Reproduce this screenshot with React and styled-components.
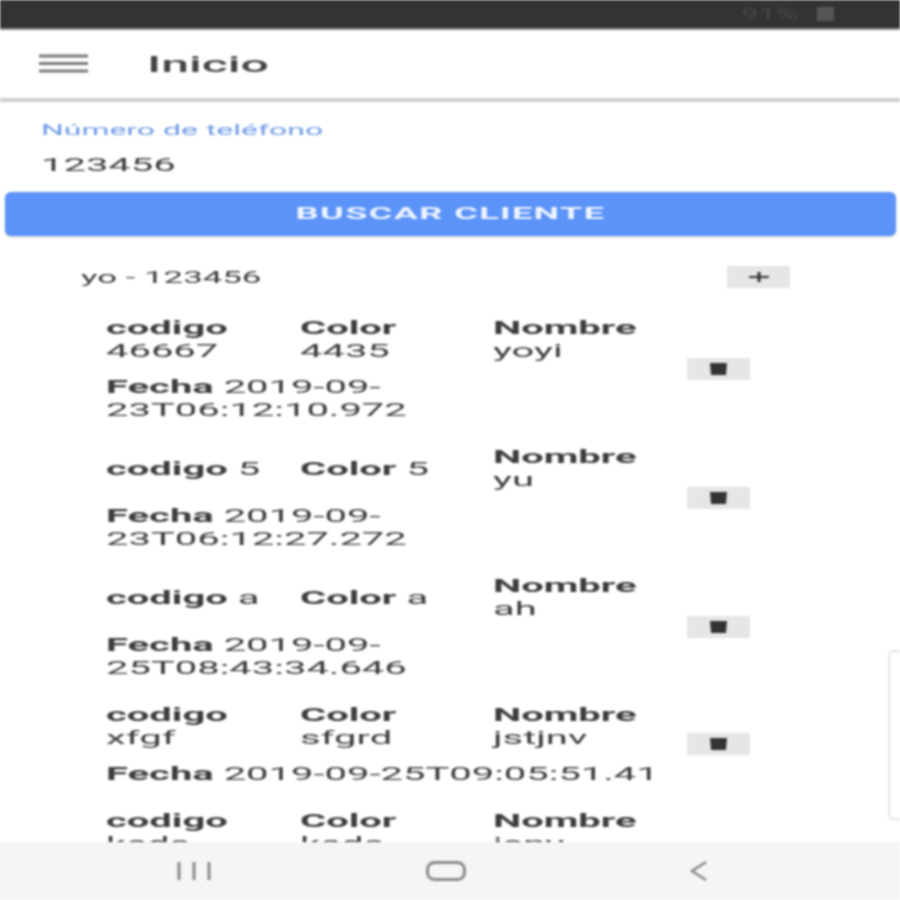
import styled, { createGlobalStyle } from 'styled-components';

// the screenshot is squashed vertically, so text gets stretched sideways
const STRETCH = 2.22;

const GlobalStyle = createGlobalStyle`
  html, body, #root {
    margin: 0;
    padding: 0;
    height: 100%;
    background: #ffffff;
  }
`;

const Page = styled.div`
  position: relative;
  width: 900px;
  height: 900px;
  overflow: hidden;
  display: flex;
  flex-direction: column;
  background: #ffffff;
  font-family: Roboto, "Liberation Sans", sans-serif;
  filter: blur(0.8px);
`;

const Text = styled.div`
  width: calc(100% / ${STRETCH});
  transform: scaleX(${STRETCH});
  transform-origin: left center;
  font-size: ${p => p.$size || 18}px;
  line-height: ${p => p.$line || 23}px;
  font-weight: ${p => p.$weight || 400};
  color: ${p => p.$color || '#3c3c3c'};
  text-align: ${p => p.$align || 'left'};
  letter-spacing: ${p => p.$spacing || 0}px;
  white-space: ${p => (p.$nowrap ? 'nowrap' : 'normal')};
`;

const StatusBar = styled.div`
  flex: none;
  height: 28px;
  background: #333333;
  border-bottom: 2px solid #8a8a8a;
  display: flex;
  align-items: center;
  justify-content: flex-end;
  gap: 6px;
  padding-right: 66px;
`;

const BatteryText = styled.div`
  width: 70px;
`;

const BatteryIcon = styled.div`
  width: 17px;
  height: 14px;
  background: #555555;
`;

const Header = styled.div`
  flex: none;
  height: 68px;
  display: flex;
  align-items: center;
  padding-left: 39px;
  gap: 59px;
`;

const MenuIcon = styled.svg`
  flex: none;
  width: 49px;
  height: 20px;
`;

const Title = styled.div`
  width: 200px;
`;

const Divider = styled.div`
  flex: none;
  height: 4px;
  background: #cfcfcf;
`;

const Content = styled.div`
  flex: 1;
  min-height: 0;
  overflow: hidden;
`;

const Field = styled.div`
  padding: 19px 41px 0;
  height: 90px;
  box-sizing: border-box;
  display: flex;
  flex-direction: column;
  gap: 12px;
`;

const SearchButton = styled.div`
  margin: 0 4px 0 5px;
  height: 44px;
  border-radius: 6px;
  background: #5b93f8;
  display: flex;
  align-items: center;
  box-shadow: 0 1px 2px rgba(0, 0, 0, 0.2);
`;

const ClientRow = styled.div`
  display: flex;
  align-items: center;
  justify-content: space-between;
  margin: 30px 110px 0 81px;
  height: 22px;
`;

const ClientName = styled.div`
  width: 400px;
`;

const ActionButton = styled.div`
  flex: none;
  width: 63px;
  height: 22px;
  background: #e6e6e6;
  display: flex;
  align-items: center;
  justify-content: center;
`;

const PlusIcon = styled.svg`
  width: 22px;
  height: 14px;
`;

const TrashIcon = styled.svg`
  width: 17px;
  height: 14px;
`;

const ItemList = styled.div`
  margin-top: 28px;
  padding-left: 106px;
  display: flex;
  flex-direction: column;
  gap: 24px;
`;

const Item = styled.div`
  display: flex;
  align-items: center;
`;

const ItemBody = styled.div`
  width: 581px;
  display: flex;
  flex-direction: column;
  gap: 13px;
`;

const Columns = styled.div`
  display: flex;
  align-items: center;
`;

const Column = styled.div`
  width: 194px;
  padding-right: 14px;
  box-sizing: border-box;
`;

const FechaBlock = styled.div`
  width: 560px;
`;

const NavBar = styled.div`
  flex: none;
  position: relative;
  height: 58px;
  background: #f5f5f5;
  display: grid;
  grid-template-columns: 176px 36px 214px 40px 224px 18px;
  align-items: center;
`;

const NavIcon = styled.svg`
  grid-column: ${p => p.$col};
  width: ${p => p.$w}px;
  height: 20px;
`;

const EdgeTab = styled.div`
  position: absolute;
  top: 650px;
  right: 0;
  width: 10px;
  height: 166px;
  border: 2px solid #e6e6e6;
  border-right: none;
  border-radius: 6px 0 0 6px;
  background: #ffffff;
`;

const items = [
  { codigo: '46667', color: '4435', nombre: 'yoyi', fecha: '2019-09-23T06:12:10.972' },
  { codigo: '5', color: '5', nombre: 'yu', fecha: '2019-09-23T06:12:27.272' },
  { codigo: 'a', color: 'a', nombre: 'ah', fecha: '2019-09-25T08:43:34.646' },
  { codigo: 'xfgf', color: 'sfgrd', nombre: 'jstjnv', fecha: '2019-09-25T09:05:51.41' },
  { codigo: 'keds', color: 'keds', nombre: 'jsny', fecha: '2019-09-25T09:07:12.112' },
];

function Trash() {
  return (
    <TrashIcon viewBox="0 0 17 14">
      <path d="M0 1h17l-1 12H1z" fill="#333" />
    </TrashIcon>
  );
}

function LabelValue({ label, value }) {
  return (
    <Text>
      <b>{label}</b> {value}
    </Text>
  );
}

function App() {
  return (
    <Page>
      <GlobalStyle />
      <StatusBar>
        <BatteryText>
          <Text $size={14} $line={16} $color="#474747" $nowrap>
            91%
          </Text>
        </BatteryText>
        <BatteryIcon />
      </StatusBar>
      <Header>
        <MenuIcon viewBox="0 0 49 20">
          <path d="M0 2h49M0 9.5h49M0 17h49" stroke="#7a7a7a" strokeWidth="3" />
        </MenuIcon>
        <Title>
          <Text $size={22.5} $line={28} $weight={500} $color="#444444">
            Inicio
          </Text>
        </Title>
      </Header>
      <Divider />
      <Content>
        <Field>
          <Text $size={14.4} $line={20} $color="#6f9be6" $nowrap>
            Número de teléfono
          </Text>
          <Text $nowrap>123456</Text>
        </Field>
        <SearchButton>
          <Text $size={16.3} $line={40} $weight={700} $color="#eef4ff" $align="center" $spacing={0.6}>
            BUSCAR CLIENTE
          </Text>
        </SearchButton>
        <ClientRow>
          <ClientName>
            <Text $size={15.7}>yo - 123456</Text>
          </ClientName>
          <ActionButton>
            <PlusIcon viewBox="0 0 22 14">
              <path d="M1 7h20" stroke="#333" strokeWidth="2" />
              <path d="M11 2v10" stroke="#333" strokeWidth="3" />
            </PlusIcon>
          </ActionButton>
        </ClientRow>
        <ItemList>
          {items.map(item => (
            <Item key={item.codigo}>
              <ItemBody>
                <Columns>
                  <Column>
                    <LabelValue label="codigo" value={item.codigo} />
                  </Column>
                  <Column>
                    <LabelValue label="Color" value={item.color} />
                  </Column>
                  <Column>
                    <LabelValue label="Nombre" value={item.nombre} />
                  </Column>
                </Columns>
                <FechaBlock>
                  <LabelValue label="Fecha" value={item.fecha} />
                </FechaBlock>
              </ItemBody>
              <ActionButton>
                <Trash />
              </ActionButton>
            </Item>
          ))}
        </ItemList>
      </Content>
      <NavBar>
        <NavIcon $col={2} $w={36} viewBox="0 0 36 20">
          <path d="M3 1v18M18 1v18M33 1v18" stroke="#8a8a8a" strokeWidth="3" />
        </NavIcon>
        <NavIcon $col={4} $w={40} viewBox="0 0 40 20">
          <rect x="1.5" y="1.5" width="37" height="17" rx="7" fill="none" stroke="#8a8a8a" strokeWidth="3" />
        </NavIcon>
        <NavIcon $col={6} $w={18} viewBox="0 0 18 20">
          <path d="M16 1L2 10l14 9" fill="none" stroke="#8a8a8a" strokeWidth="2.5" />
        </NavIcon>
      </NavBar>
      <EdgeTab />
    </Page>
  );
}

export default App;
